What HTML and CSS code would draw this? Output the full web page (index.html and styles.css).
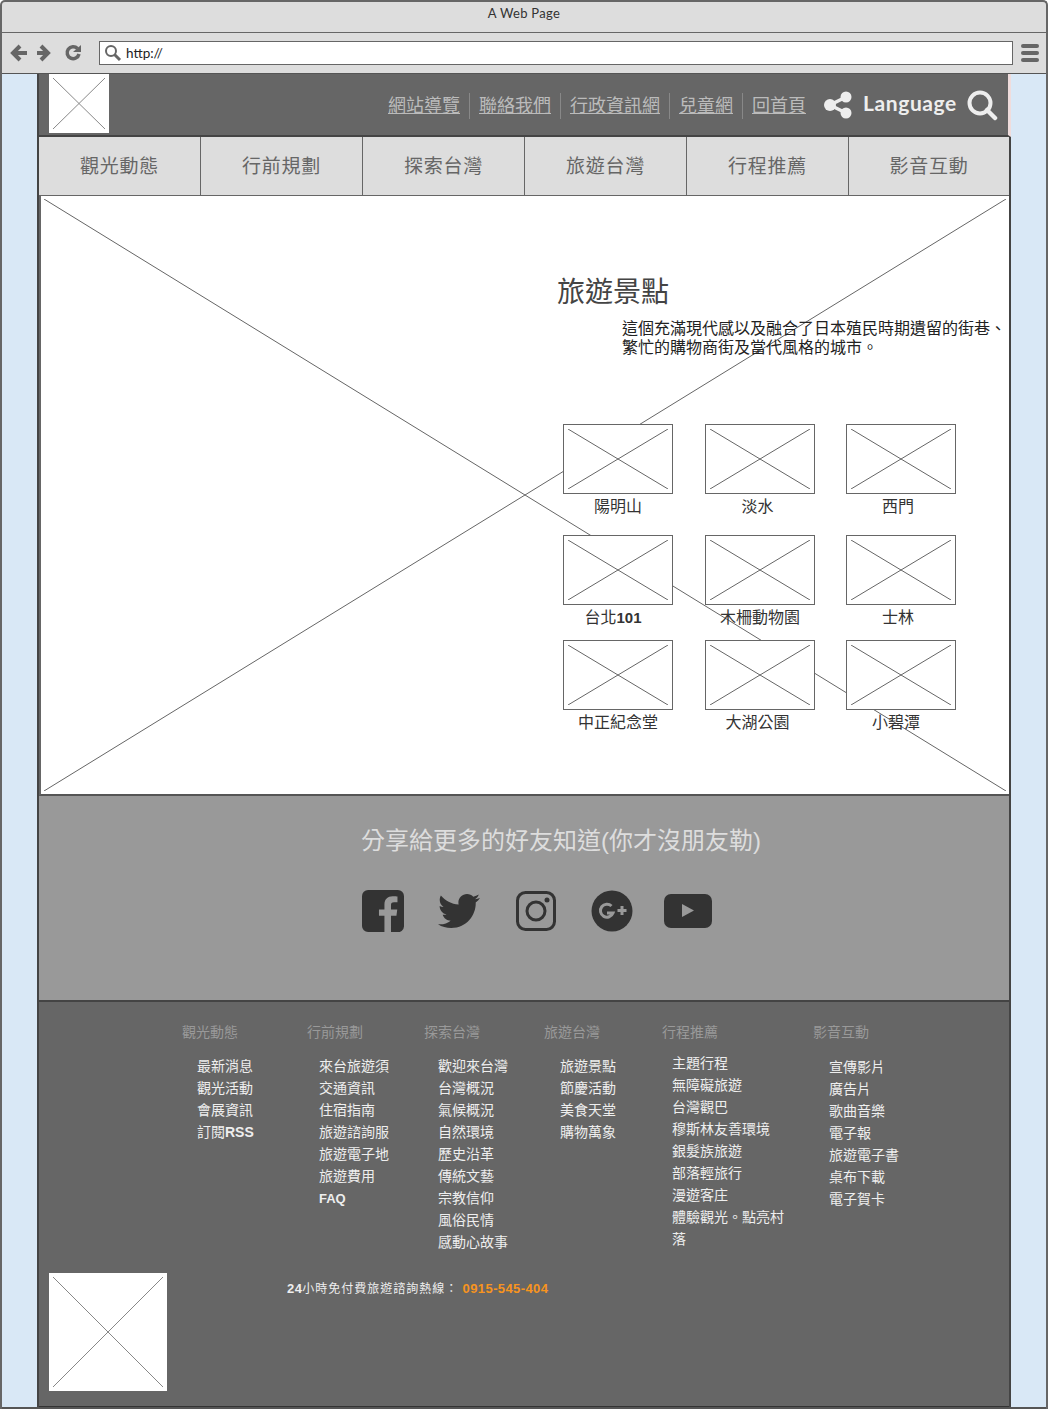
FILE: index.html
```html
<!DOCTYPE html>
<html lang="zh-Hant">
<head>
    <meta charset="UTF-8">
    <meta name="viewport" content="width=device-width, initial-scale=1.0">
    <title>A Web Page</title>
    <link rel="stylesheet" href="styles.css">
</head>
<body>
    <div class="window">
        <div class="title-bar">A Web Page</div>
        <div class="address-bar">
            <svg class="tool-icon" width="78" height="20" viewBox="0 0 78 20">
                <path d="M11 3 4 10l7 7M4.500 10H18" fill="none" stroke="#666" stroke-width="4"/>
                <path d="M32 3l7 7-7 7M38.500 10H28" fill="none" stroke="#666" stroke-width="4"/>
                <path d="M68.500 5.500A6 6 0 1 0 70 11" fill="none" stroke="#666" stroke-width="3.500"/>
                <path d="M64 9h8V2z" fill="#666"/>
            </svg>
            <div class="url-box">
                <svg width="18" height="18" viewBox="0 0 18 18">
                    <circle cx="7" cy="7" r="5" fill="none" stroke="#666" stroke-width="2"/>
                    <path d="M10.500 10.500 16 16" stroke="#666" stroke-width="3"/>
                </svg>
                <span>http://</span>
            </div>
            <div class="burger"><i></i><i></i><i></i></div>
        </div>
        <div class="viewport">
            <div class="page">
                <header class="top">
                    <div class="logo"><svg class="cross" viewBox="0 0 100 100" preserveAspectRatio="none"><path d="M0 0 100 100M100 0 0 100"/></svg></div>
                    <nav class="top-links">
                        <a>網站導覽</a><a>聯絡我們</a><a>行政資訊網</a><a>兒童網</a><a>回首頁</a>
                    </nav>
                    <svg class="share" width="28" height="28" viewBox="0 0 28 28">
                        <path d="M22 6 6 14l16 8" fill="none" stroke="#eee" stroke-width="3.500"/>
                        <circle cx="22" cy="6" r="5.500" fill="#eee"/>
                        <circle cx="6" cy="14" r="6" fill="#eee"/>
                        <circle cx="22" cy="22" r="5.500" fill="#eee"/>
                    </svg>
                    <span class="language">Language</span>
                    <svg class="search" width="31" height="31" viewBox="0 0 31 31">
                        <circle cx="13" cy="13" r="10.500" fill="none" stroke="#eee" stroke-width="4"/>
                        <path d="M20 20l8 8" stroke="#eee" stroke-width="4.500" stroke-linecap="round"/>
                    </svg>
                </header>
                <nav class="main-nav">
                    <a>觀光動態</a><a>行前規劃</a><a>探索台灣</a><a>旅遊台灣</a><a>行程推薦</a><a>影音互動</a>
                </nav>
                <section class="hero">
                    <svg class="cross hero-cross" viewBox="0 0 100 100" preserveAspectRatio="none"><path d="M0 0 100 100M100 0 0 100"/></svg>
                    <div class="hero-body">
                        <h2>旅遊景點</h2>
                        <p>這個充滿現代感以及融合了日本殖民時期遺留的街巷、繁忙的購物商街及當代風格的城市。</p>
                        <div class="spots">
                            <figure><div class="thumb"><svg class="cross" viewBox="0 0 100 100" preserveAspectRatio="none"><path d="M0 0 100 100M100 0 0 100"/></svg></div><figcaption>陽明山</figcaption></figure>
                            <figure><div class="thumb"><svg class="cross" viewBox="0 0 100 100" preserveAspectRatio="none"><path d="M0 0 100 100M100 0 0 100"/></svg></div><figcaption>淡水</figcaption></figure>
                            <figure><div class="thumb"><svg class="cross" viewBox="0 0 100 100" preserveAspectRatio="none"><path d="M0 0 100 100M100 0 0 100"/></svg></div><figcaption>西門</figcaption></figure>
                            <figure><div class="thumb"><svg class="cross" viewBox="0 0 100 100" preserveAspectRatio="none"><path d="M0 0 100 100M100 0 0 100"/></svg></div><figcaption>台北<b>101</b></figcaption></figure>
                            <figure><div class="thumb"><svg class="cross" viewBox="0 0 100 100" preserveAspectRatio="none"><path d="M0 0 100 100M100 0 0 100"/></svg></div><figcaption>木柵動物園</figcaption></figure>
                            <figure><div class="thumb"><svg class="cross" viewBox="0 0 100 100" preserveAspectRatio="none"><path d="M0 0 100 100M100 0 0 100"/></svg></div><figcaption>士林</figcaption></figure>
                            <figure><div class="thumb"><svg class="cross" viewBox="0 0 100 100" preserveAspectRatio="none"><path d="M0 0 100 100M100 0 0 100"/></svg></div><figcaption>中正紀念堂</figcaption></figure>
                            <figure><div class="thumb"><svg class="cross" viewBox="0 0 100 100" preserveAspectRatio="none"><path d="M0 0 100 100M100 0 0 100"/></svg></div><figcaption>大湖公園</figcaption></figure>
                            <figure><div class="thumb"><svg class="cross" viewBox="0 0 100 100" preserveAspectRatio="none"><path d="M0 0 100 100M100 0 0 100"/></svg></div><figcaption>小碧潭</figcaption></figure>
                        </div>
                    </div>
                </section>
                <section class="share-band">
                    <h3>分享給更多的好友知道(你才沒朋友勒)</h3>
                    <div class="social">
                        <svg width="42" height="42" viewBox="0 0 24 24"><path fill="#333" d="M20.500 0h-17A3.500 3.500 0 0 0 0 3.500v17A3.500 3.500 0 0 0 3.500 24H12.820v-9.294H9.692v-3.622h3.128V8.413c0-3.100 1.893-4.788 4.659-4.788 1.325 0 2.463.099 2.795.143v3.240l-1.918.001c-1.504 0-1.795.715-1.795 1.763v2.313h3.587l-.467 3.622h-3.120V24h2.939A3.500 3.500 0 0 0 24 20.500v-17A3.500 3.500 0 0 0 20.500 0z"/></svg>
                        <svg width="42" height="42" viewBox="0 0 24 24"><path fill="#333" d="M23.954 4.569c-.885.389-1.830.654-2.825.775 1.014-.611 1.794-1.574 2.163-2.723-.951.555-2.005.959-3.127 1.184-.896-.959-2.173-1.559-3.591-1.559-2.717 0-4.920 2.203-4.920 4.917 0 .39.045.765.127 1.124C7.691 8.094 4.066 6.130 1.640 3.161c-.427.722-.666 1.561-.666 2.475 0 1.710.870 3.213 2.188 4.096-.807-.026-1.566-.248-2.228-.616v.061c0 2.385 1.693 4.374 3.946 4.827-.413.111-.849.171-1.296.171-.314 0-.615-.03-.916-.086.631 1.953 2.445 3.377 4.604 3.417-1.680 1.319-3.809 2.105-6.102 2.105-.39 0-.779-.023-1.170-.067 2.189 1.394 4.768 2.209 7.557 2.209 9.054 0 13.999-7.496 13.999-13.986 0-.209 0-.42-.015-.63.961-.689 1.800-1.560 2.460-2.548l-.047-.02z"/></svg>
                        <svg width="42" height="42" viewBox="0 0 42 42"><rect x="2.500" y="2.500" width="37" height="37" rx="8" fill="none" stroke="#333" stroke-width="3"/><circle cx="21" cy="21" r="9" fill="none" stroke="#333" stroke-width="3"/><circle cx="32" cy="10" r="2.500" fill="#333"/></svg>
                        <svg width="42" height="42" viewBox="0 0 42 42"><circle cx="21" cy="21" r="20.500" fill="#333"/><path d="M20.500 16a6.500 6.500 0 1 0 1.500 7h-6" fill="none" stroke="#999" stroke-width="3"/><path d="M31 16v9M26.500 20.500h9" stroke="#999" stroke-width="3"/></svg>
                        <svg width="48" height="34" viewBox="0 0 48 34"><rect width="48" height="34" rx="7" fill="#333"/><path d="M18 10v13l12-6.500z" fill="#999"/></svg>
                    </div>
                </section>
                <footer class="site-footer">
                    <div class="columns">
                        <div class="col">
                            <h4>觀光動態</h4>
                            <ul><li>最新消息</li><li>觀光活動</li><li>會展資訊</li><li>訂閱<b>RSS</b></li></ul>
                        </div>
                        <div class="col">
                            <h4>行前規劃</h4>
                            <ul><li>來台旅遊須</li><li>交通資訊</li><li>住宿指南</li><li>旅遊諮詢服</li><li>旅遊電子地</li><li>旅遊費用</li><li><b class="faq">FAQ</b></li></ul>
                        </div>
                        <div class="col">
                            <h4>探索台灣</h4>
                            <ul><li>歡迎來台灣</li><li>台灣概況</li><li>氣候概況</li><li>自然環境</li><li>歷史沿革</li><li>傳統文藝</li><li>宗教信仰</li><li>風俗民情</li><li>感動心故事</li></ul>
                        </div>
                        <div class="col">
                            <h4>旅遊台灣</h4>
                            <ul><li>旅遊景點</li><li>節慶活動</li><li>美食天堂</li><li>購物萬象</li></ul>
                        </div>
                        <div class="col">
                            <h4>行程推薦</h4>
                            <ul><li>主題行程</li><li>無障礙旅遊</li><li>台灣觀巴</li><li>穆斯林友善環境</li><li>銀髮族旅遊</li><li>部落輕旅行</li><li>漫遊客庄</li><li>體驗觀光。點亮村落</li></ul>
                        </div>
                        <div class="col">
                            <h4>影音互動</h4>
                            <ul><li>宣傳影片</li><li>廣告片</li><li>歌曲音樂</li><li>電子報</li><li>旅遊電子書</li><li>桌布下載</li><li>電子賀卡</li></ul>
                        </div>
                    </div>
                    <div class="footer-bottom">
                        <div class="footer-logo"><svg class="cross" viewBox="0 0 100 100" preserveAspectRatio="none"><path d="M0 0 100 100M100 0 0 100"/></svg></div>
                        <p class="hotline"><b>24</b>小時免付費旅遊諮詢熱線： <b class="phone">0915-545-404</b></p>
                    </div>
                </footer>
            </div>
        </div>
    </div>
</body>
</html>
```

FILE: styles.css
```css
* {
    margin: 0;
    padding: 0;
    box-sizing: border-box;
}

body {
    font-family: "Liberation Sans", "Noto Sans CJK TC", sans-serif;
    background: white;
    overflow: hidden;
}

.window {
    width: 1048px;
    height: 1409px;
    border: 2px solid #666;
    border-bottom: 0;
    border-radius: 5px 5px 0 0;
    background: #ddd;
    display: flex;
    flex-direction: column;
    overflow: hidden;
}

.title-bar {
    height: 31px;
    border-bottom: 1px solid #666;
    font-family: Lato, sans-serif;
    font-size: 13px;
    letter-spacing: 0.3px;
    line-height: 22px;
    text-align: center;
    color: #333;
}

.address-bar {
    height: 40px;
    display: flex;
    align-items: center;
    padding: 0 6px 1px 7px;
}

.tool-icon {
    flex: none;
}

.url-box {
    width: 914px;
    height: 24px;
    margin-left: 12px;
    background: white;
    border: 1px solid #666;
    display: flex;
    align-items: center;
    gap: 4px;
    padding-left: 4px;
    font-family: Lato, sans-serif;
    font-size: 13.5px;
    color: #222;
}

.burger {
    margin-left: 8px;
    width: 18px;
    display: flex;
    flex-direction: column;
    gap: 3px;
}

.burger i {
    height: 4px;
    border-radius: 2px;
    background: #666;
}

.viewport {
    flex: 1;
    background: #d9e8f6;
    border-top: 1px solid #555;
    border-bottom: 2px solid #555;
    padding: 0 35px;
    display: flex;
    justify-content: center;
    min-height: 0;
}

.page {
    width: 974px;
    border-left: 2px solid #444;
    border-right: 2px solid #444;
    background: #666;
    display: flex;
    flex-direction: column;
}

.cross {
    display: block;
    width: 100%;
    height: 100%;
}

.cross path {
    fill: none;
    stroke: #666;
    stroke-width: 1px;
    vector-effect: non-scaling-stroke;
}

.logo .cross path,
.footer-logo .cross path {
    stroke: #888;
}

.top {
    height: 63px;
    border-bottom: 2px solid #444;
    border-right: 3px solid #efdcdc;
    display: flex;
    align-items: flex-start;
    padding-left: 10px;
    margin-right: -2px;
}

.logo {
    width: 60px;
    height: 59px;
    background: white;
    padding: 4px;
}

.top-links {
    margin-left: 270px;
    margin-top: 19px;
    display: flex;
    height: 26px;
}

.top-links a {
    color: #bbb;
    font-size: 18px;
    line-height: 26px;
    text-decoration: underline;
    padding: 0 9px;
    border-left: 1px solid #888;
    white-space: nowrap;
}

.top-links a:first-child {
    border-left: 0;
}

.share {
    margin: 17px 0 0 9px;
    flex: none;
}

.language {
    margin: 14px 0 0 11px;
    font-family: Lato, sans-serif;
    font-size: 21px;
    font-weight: 700;
    letter-spacing: 0.6px;
    line-height: 29px;
    color: #eee;
}

.search {
    margin: 16px 0 0 10px;
    flex: none;
}

.main-nav {
    height: 59px;
    display: grid;
    grid-template-columns: 162px 162px 162px 162px 162px 1fr;
    background: #ddd;
    border-bottom: 1px solid #666;
}

.main-nav a {
    border-right: 1px solid #666;
    color: #666;
    font-size: 19px;
    line-height: 59px;
    letter-spacing: 0.75px;
    text-align: center;
}

.main-nav a:last-child {
    border-right: 0;
}

.hero {
    position: relative;
    height: 600px;
    background: white;
    border-left: 2px solid #666;
    border-bottom: 2px solid #555;
}

.hero-cross {
    position: absolute;
    left: 3px;
    top: 3px;
    width: 962px;
    height: 592px;
}

.hero-body {
    position: relative;
    padding: 76px 0 0 516px;
}

.hero-body h2 {
    font-size: 28px;
    font-weight: 400;
    line-height: 42px;
    color: #444;
}

.hero-body p {
    margin: 5px 0 0 65px;
    width: 388px;
    font-size: 16px;
    line-height: 19px;
    color: #222;
}

.spots {
    margin: 67px 0 0 6px;
    display: grid;
    grid-template-columns: 110px 110px 110px;
    grid-template-rows: 111px 105px 105px;
    column-gap: 32px;
}

.spots figure {
    text-align: center;
    font-size: 16px;
    line-height: 26px;
    color: #333;
}

.spots figure b {
    font-size: 15px;
}

.spots figure:nth-child(3n) {
    margin-left: -1px;
    margin-right: 1px;
}

.spots figure:nth-child(2) figcaption,
.spots figure:nth-child(8) figcaption {
    padding-right: 5px;
}

.spots figure:nth-child(3) figcaption,
.spots figure:nth-child(6) figcaption {
    padding-right: 6px;
}

.spots figure:nth-child(9) figcaption {
    padding-right: 10px;
}

.spots figure:nth-child(4) figcaption {
    padding-right: 10px;
}

.thumb {
    height: 70px;
    background: white;
    border: 1px solid #666;
    padding: 4px;
}

.share-band {
    height: 206px;
    background: #999;
    border-bottom: 2px solid #444;
    text-align: center;
}

.share-band h3 {
    padding: 27px 0 0 74px;
    font-size: 24px;
    font-weight: 400;
    line-height: 36px;
    color: #ddd;
}

.social {
    margin: 31px 0 0 323px;
    display: flex;
    align-items: center;
    gap: 34px;
}

.social svg:nth-child(3) {
    margin-left: 1px;
}

.social svg:last-child {
    margin-left: -3px;
}

.site-footer {
    flex: 1;
    background: #666;
    border-bottom: 1px solid #333;
}

.columns {
    height: 271px;
    padding: 18px 0 0 143px;
    display: grid;
    grid-template-columns: 125px 117px 120px 118px 151px 170px;
}

.col h4 {
    font-size: 14px;
    font-weight: 400;
    line-height: 24px;
    color: #999;
}

.col ul {
    list-style: none;
    margin: 11px 0 0 15px;
    font-size: 14px;
    line-height: 22px;
    color: #eee;
}

.faq {
    font-size: 13px;
}

.col:nth-child(2) ul {
    margin-left: 12px;
}

.col:nth-child(3) ul {
    margin-left: 14px;
}

.col:nth-child(4) ul {
    margin-left: 16px;
}

.col:nth-child(5) ul {
    margin: 8px 0 0 10px;
    width: 115px;
}

.col:nth-child(6) ul {
    margin: 12px 0 0 16px;
}

.footer-bottom {
    display: flex;
    align-items: flex-start;
    padding-left: 10px;
}

.footer-logo {
    width: 118px;
    height: 118px;
    background: white;
    padding: 4px;
}

.hotline {
    margin: 7px 0 0 120px;
    font-size: 12px;
    line-height: 18px;
    letter-spacing: 1px;
    color: #eee;
}

.hotline b {
    font-size: 13px;
    letter-spacing: 0.4px;
}

.phone {
    color: #f7941e;
}
```
